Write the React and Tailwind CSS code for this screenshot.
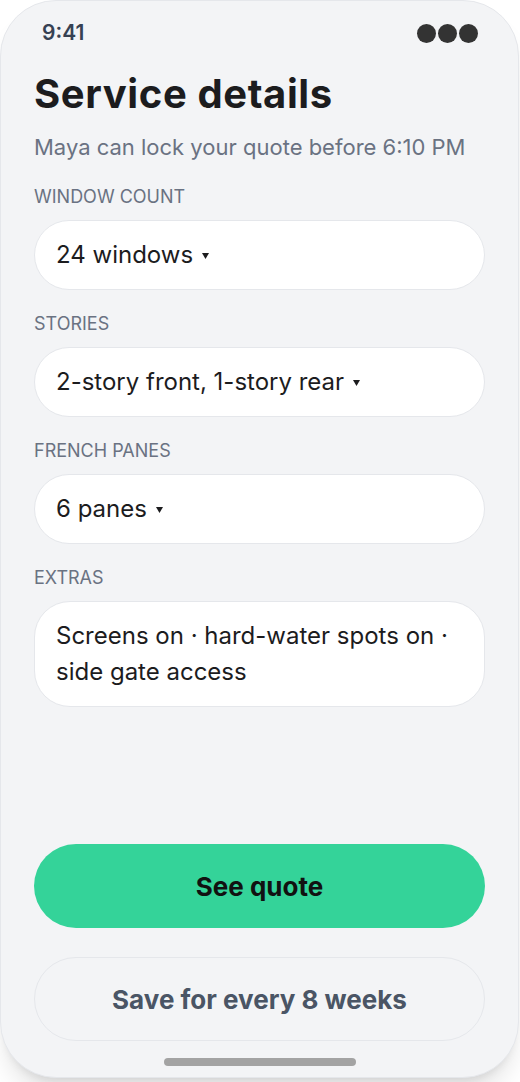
import React from "react";

const fields = [
  { label: "WINDOW COUNT", value: "24 windows" },
  { label: "STORIES", value: "2-story front, 1-story rear" },
  { label: "FRENCH PANES", value: "6 panes" },
];

const Caret = () => (
  <svg className="ml-[9px] mt-[2px]" width="7" height="6" viewBox="0 0 7 6">
    <path d="M0 0h7L3.5 6z" fill="#1c1c1e" />
  </svg>
);

const Field = ({ label, children, multi }) => (
  <div className="flex flex-col">
    <div className="text-[18px] leading-[22px] text-gray-500">{label}</div>
    <div
      className={
        multi
          ? "mt-[12px] bg-white border border-gray-200 rounded-[36px] px-[21px] py-[16px] text-[24px] leading-[36px] text-[#1c1c1e]"
          : "mt-[12px] h-[70px] bg-white border border-gray-200 rounded-full px-[21px] flex items-center text-[24px] text-[#1c1c1e]"
      }
    >
      {children}
    </div>
  </div>
);

const App = () => {
  return (
    <div className="min-h-screen bg-white" style={{ fontFamily: "Inter, 'Noto Sans', sans-serif" }}>
      <div className="w-[519px] h-[1078px] rounded-[56px] border border-gray-200 bg-gray-100 shadow-xl flex flex-col px-[33px] overflow-hidden">
        <div className="flex items-center justify-between pt-[20px] px-[8px] h-[44px]">
          <span className="text-[21px] font-semibold text-gray-700">9:41</span>
          <div className="flex gap-[2px] mr-[-1px]">
            <span className="w-[19px] h-[19px] rounded-full bg-[#333]" />
            <span className="w-[19px] h-[19px] rounded-full bg-[#333]" />
            <span className="w-[19px] h-[19px] rounded-full bg-[#333]" />
          </div>
        </div>

        <h1 className="mt-[25px] text-[40px] leading-[48px] font-bold text-[#1c1c1e] tracking-[0.6px]">
          Service details
        </h1>
        <p className="mt-[15px] text-[22px] leading-[28px] text-gray-500">
          Maya can lock your quote before 6:10 PM
        </p>

        <div className="mt-[25px] flex flex-col gap-[23px]">
          {fields.map((f) => (
            <Field key={f.label} label={f.label}>
              <span>{f.value}</span>
              <Caret />
            </Field>
          ))}
          <Field label="EXTRAS" multi>
            Screens on · hard-water spots on · side gate access
          </Field>
        </div>

        <div className="flex-1" />

        <button className="h-[84px] rounded-full bg-[#34d399] text-[26px] font-bold text-[#111]">
          See quote
        </button>
        <button className="mt-[29px] h-[84px] rounded-full border border-gray-200 text-[26px] font-bold text-gray-600">
          Save for every 8 weeks
        </button>
        <div className="mt-[17px] mb-[11px] mx-auto w-[192px] h-[8px] rounded-full bg-[#a3a3a3]" />
      </div>
    </div>
  );
};

export default App;
